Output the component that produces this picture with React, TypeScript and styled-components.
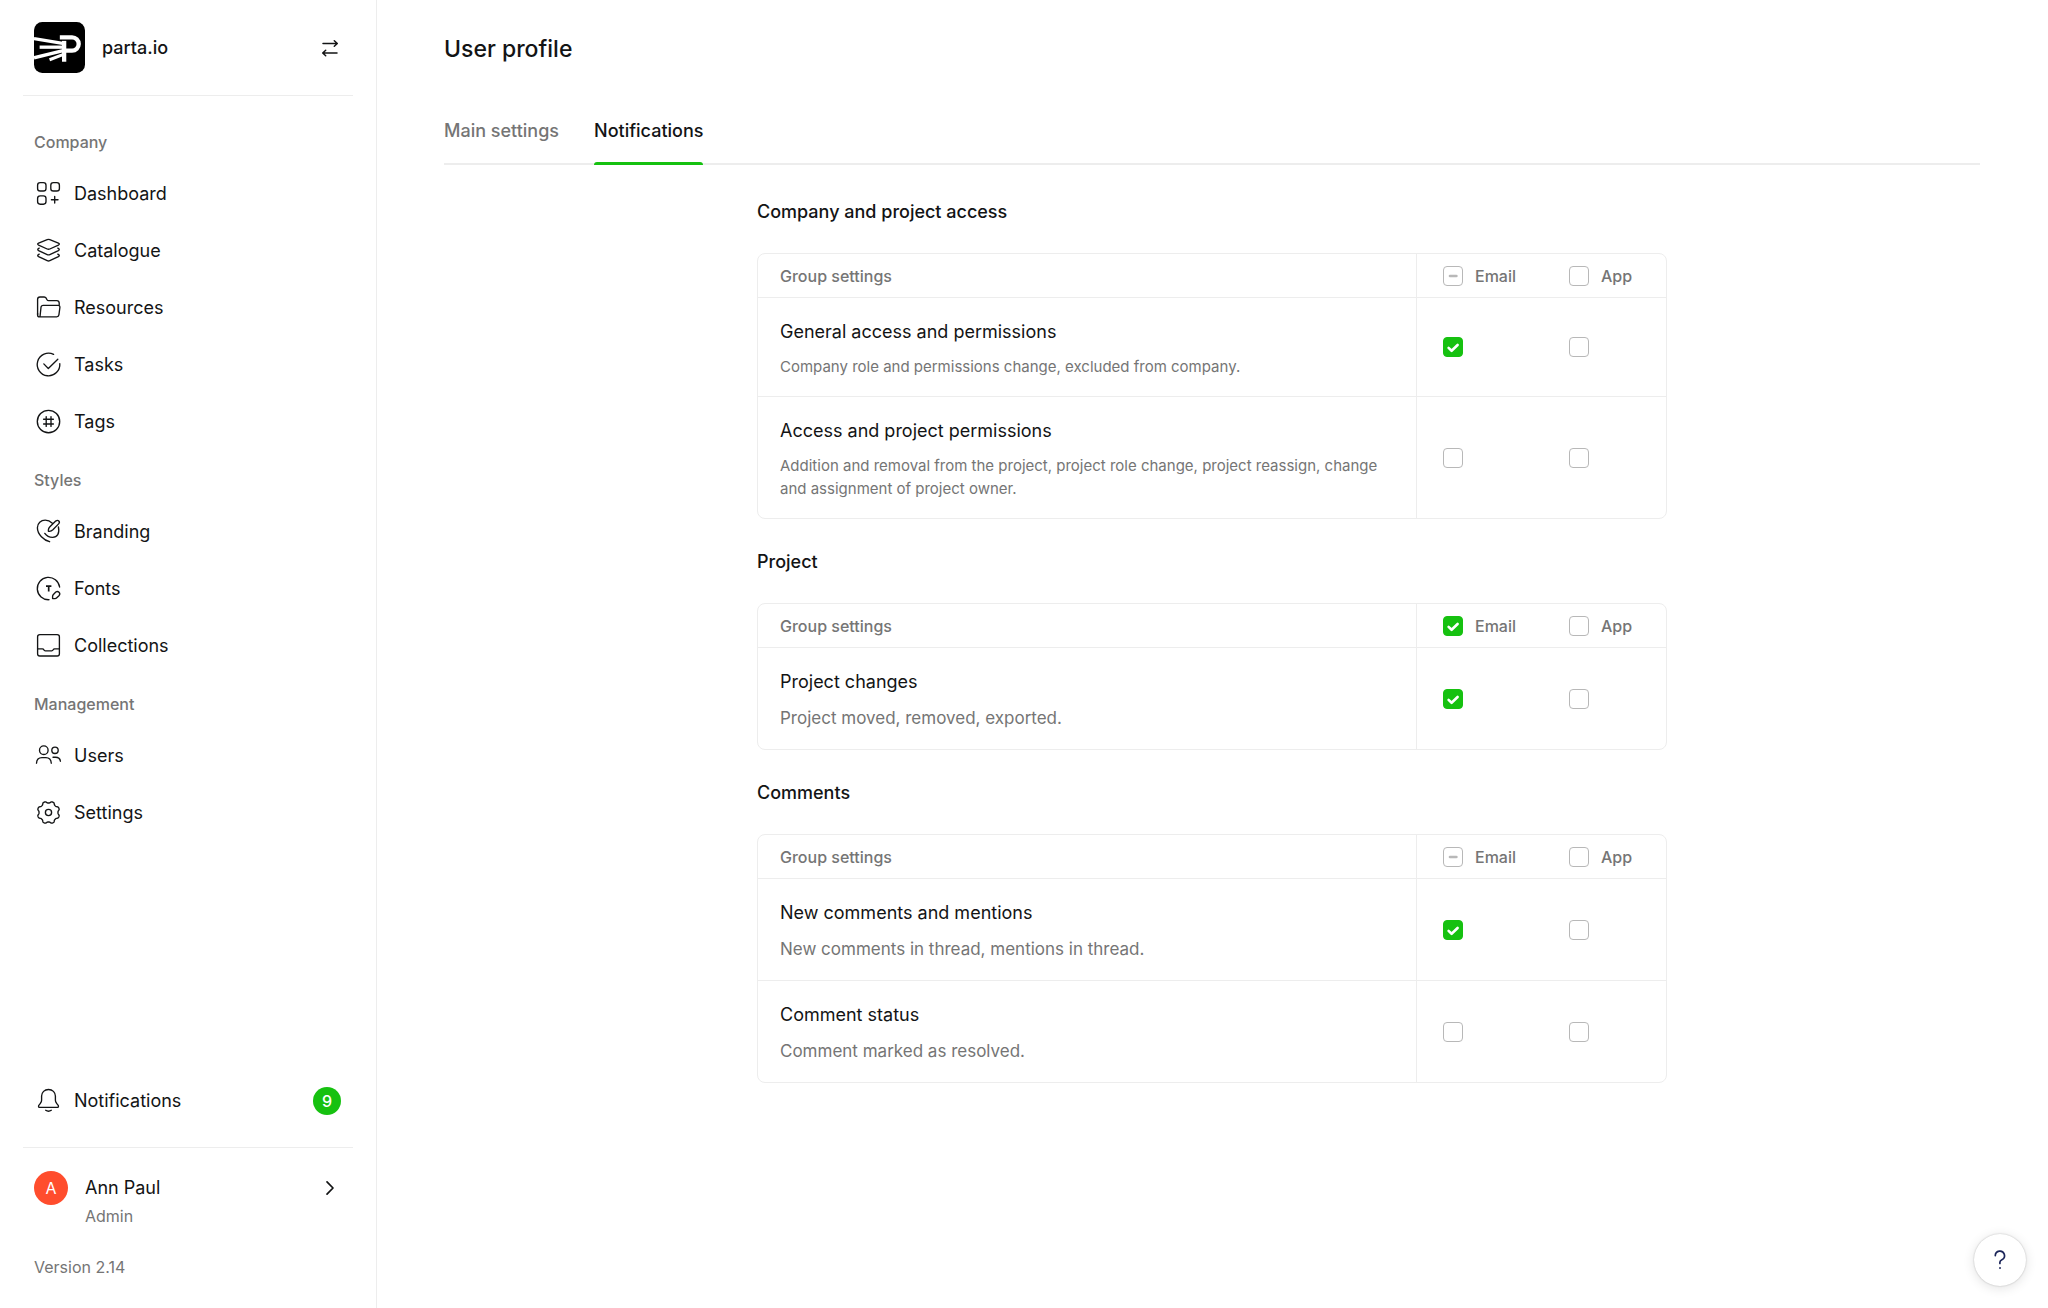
import React, { useEffect, useRef, useState } from "react";
import styled, { createGlobalStyle } from "styled-components";

const color = {
  text: "#131415",
  muted: "#757575",
  line: "#ededed",
  green: "#16c110",
  red: "#ff4d2d",
  control: "#b8b8b8",
};

const GlobalStyle = createGlobalStyle`
  *, *::before, *::after { box-sizing: border-box; }
  body {
    margin: 0;
    background: #fff;
    color: ${color.text};
    font-family: Inter, "Liberation Sans", sans-serif;
    font-size: 18px;
    line-height: 24px;
  }
  button { font: inherit; color: inherit; background: none; border: 0; padding: 0; cursor: pointer; }
  h1, h2, p { margin: 0; }
`;

const Layout = styled.div`
  display: flex;
  min-height: 100vh;
`;

const Sidebar = styled.aside`
  display: flex;
  flex-direction: column;
  flex: 0 0 377px;
  padding: 0 23px;
  border-right: 1px solid ${color.line};
`;

const Brand = styled.div`
  display: flex;
  align-items: center;
  gap: 17px;
  padding: 22px 12px 22px 11px;
  margin-bottom: 16px;
  border-bottom: 1px solid ${color.line};
`;

const BrandName = styled.span`
  flex: 1;
  font-weight: 500;
`;

const IconButton = styled.button`
  display: grid;
  place-items: center;
  width: 22px;
  height: 22px;
`;

const NavLabel = styled.h2`
  padding: 18px 11px 11px;
  font-size: 16px;
  font-weight: 500;
  color: ${color.muted};
`;

const NavItem = styled.a`
  display: flex;
  align-items: center;
  gap: 13px;
  height: 57px;
  padding: 0 12px 0 13px;
  color: inherit;
  text-decoration: none;
`;

const NavText = styled.span`
  flex: 1;
`;

const Badge = styled.span`
  display: grid;
  place-items: center;
  width: 28px;
  height: 28px;
  border-radius: 14px;
  background: ${color.green};
  color: #fff;
  font-size: 16px;
  font-weight: 500;
`;

const SidebarFooter = styled.div`
  margin-top: auto;
  padding-bottom: 29px;
`;

const Account = styled.button`
  display: grid;
  grid-template-columns: 34px 1fr 22px;
  column-gap: 17px;
  row-gap: 1px;
  align-items: center;
  justify-items: start;
  width: 100%;
  margin-top: 18px;
  padding: 23px 12px 0 11px;
  border-top: 1px solid ${color.line};
  text-align: left;
`;

const Avatar = styled.span`
  display: grid;
  place-items: center;
  width: 34px;
  height: 34px;
  border-radius: 17px;
  background: ${color.red};
  color: #fff;
  font-size: 16px;
`;

const Role = styled.span`
  grid-column: 2;
  font-size: 16px;
  line-height: 20px;
  color: ${color.muted};
`;

const Version = styled.p`
  padding: 29px 11px 0;
  font-size: 16px;
  color: ${color.muted};
`;

const Main = styled.main`
  flex: 1;
  min-width: 0;
  padding: 33px 68px 60px 67px;
`;

const Title = styled.h1`
  font-size: 23px;
  font-weight: 500;
  line-height: 32px;
`;

const Tabs = styled.div`
  display: flex;
  gap: 35px;
  margin-top: 54px;
  box-shadow: inset 0 -2px ${color.line};
`;

const Tab = styled.button<{ $active?: boolean }>`
  display: flex;
  flex-direction: column;
  gap: 19px;
  font-weight: 500;
  color: ${(p) => (p.$active ? color.text : color.muted)};

  &::after {
    content: "";
    align-self: stretch;
    height: 3px;
    border-radius: 3px 3px 0 0;
    background: ${(p) => (p.$active ? color.green : "transparent")};
  }
`;

const Panel = styled.div`
  display: grid;
  gap: 31px;
  max-width: 910px;
  margin: 0 auto;
  padding-top: 35px;
`;

const SectionTitle = styled.h2`
  margin-bottom: 29px;
  font-size: 18px;
  font-weight: 500;
`;

const Table = styled.table`
  width: 100%;
  table-layout: fixed;
  border: 1px solid ${color.line};
  border-radius: 8px;
  border-collapse: separate;
  border-spacing: 0;
  text-align: left;

  tbody th, tbody td { border-top: 1px solid ${color.line}; }
`;

const HeadCell = styled.th`
  height: 43px;
  padding: 0 22px;
  border-right: 1px solid ${color.line};
  font-size: 16px;
  font-weight: 500;
  color: ${color.muted};
`;

const HeadCheck = styled.th<{ $width: number }>`
  width: ${(p) => p.$width}px;
  padding: 0 0 0 26px;
`;

const CheckLabel = styled.label`
  display: flex;
  align-items: center;
  gap: 12px;
  font-size: 16px;
  font-weight: 500;
  color: ${color.muted};
`;

const RowCell = styled.th`
  padding: 22px 12px 18px 22px;
  border-right: 1px solid ${color.line};
  font-weight: 400;
`;

const RowText = styled.p<{ $large?: boolean }>`
  margin-top: 11px;
  font-size: ${(p) => (p.$large ? 17 : 15)}px;
  line-height: ${(p) => (p.$large ? 26 : 23)}px;
  color: ${color.muted};
`;

const CheckCell = styled.td`
  padding: 0 0 0 26px;
`;

const CheckWrap = styled.span`
  display: grid;
  width: 20px;
  height: 20px;

  & > * { grid-area: 1 / 1; }
  svg { pointer-events: none; }
`;

const CheckInput = styled.input`
  appearance: none;
  width: 20px;
  height: 20px;
  margin: 0;
  border: 1px solid ${color.control};
  border-radius: 4px;
  background: #fff;
  cursor: pointer;

  &:checked { border-color: ${color.green}; background: ${color.green}; }
`;

const HelpButton = styled.button`
  position: fixed;
  right: 22px;
  bottom: 22px;
  display: grid;
  place-items: center;
  width: 52px;
  height: 52px;
  border-radius: 26px;
  background: #fff;
  box-shadow: 0 0 2px rgba(0, 0, 0, 0.25), 0 2px 12px rgba(0, 0, 0, 0.12);
`;

const LineSvg = styled.svg`
  flex: none;
  fill: none;
  stroke: currentColor;
  stroke-width: 1.35;
  stroke-linecap: round;
  stroke-linejoin: round;
`;

function gearPath() {
  const points: string[] = [];
  for (let i = 0; i < 160; i++) {
    const a = (i / 160) * Math.PI * 2;
    const wave = Math.cos(8 * (a - Math.PI / 8));
    const r = 10.35 + 0.95 * Math.tanh(wave * 1.6);
    points.push(`${(12.5 + r * Math.cos(a)).toFixed(2)} ${(12.5 + r * Math.sin(a)).toFixed(2)}`);
  }
  return `M${points.join("L")}Z`;
}

const icons: Record<string, React.ReactNode> = {
  dashboard: (
    <>
      <rect x="1.6" y="1.6" width="8.4" height="8.4" rx="2.6" />
      <rect x="14.8" y="1.6" width="8.6" height="8.4" rx="2.6" />
      <rect x="1.6" y="14.8" width="8.4" height="8.4" rx="2.6" />
      <path d="M18.7 15.4v6.6M15.4 18.7H22" />
    </>
  ),
  catalogue: (
    <>
      <path d="M11.2 1.6q1.3-.5 2.6 0l8.6 3.5q1.9 1 0 2L13.8 11q-1.3.6-2.6 0L2.6 7.1q-1.9-1 0-2z" />
      <path d="M3.2 10.1q-2.6 1.4-.6 2.6l8.6 3.9q1.3.6 2.6 0l8.6-3.9q2-1.2-.6-2.6" />
      <path d="M3.2 16.1q-2.6 1.4-.6 2.6l8.6 4q1.3.6 2.6 0l8.6-4q2-1.2-.6-2.6" />
    </>
  ),
  resources: (
    <>
      <path d="M1.6 19.5V4.3Q1.6 2 3.9 2h4.3q1.3 0 2 1.2l.8 1.5q.5.9 1.6.9h8.2q2.3 0 2.4 2.3v2.2" />
      <path d="M1.6 18.5v1.4q0 1.9 1.9 1.9h17.2q1.9 0 2.2-1.9l1-7.4q.2-2.2-1.9-2.2H7.2q-2 0-2.2 2l-1 9.4" />
    </>
  ),
  tasks: (
    <>
      <path d="M17.6 2.4A11.3 11.3 0 1 0 23.8 11.6" />
      <path d="M7.8 11.9l4.5 4.6 9.5-9.2" />
    </>
  ),
  tags: (
    <>
      <circle cx="12.5" cy="12.5" r="11.2" />
      <path d="M10.2 7.6v9.8M15 7.6v9.8M7.6 10.2h9.8M7.6 15h9.8" />
    </>
  ),
  branding: (
    <>
      <path d="M13.6 22.7C8 21.4 1.4 15.5 1.4 8.8C1.4 4 5 1.2 9.2 1.2c2.6 0 5.2 1.2 7.2 3" />
      <path d="M8.8 14.4c1.6 2.3 4.8 3.9 7.8 3.9c4.6 0 7.3-3.6 5.8-10.4" />
      <path d="M12.3 11.4q.1-2.1 1.6-3.6l5.8-5.7q1.8-1.4 3.1-.2t-.2 3l-5.7 5.8q-1.5 1.4-3.6 1.7q-1.2.1-1-1z" />
    </>
  ),
  fonts: (
    <>
      <path d="M13 23.7A11.2 11.2 0 1 1 23.6 11" />
      <path d="M10 10.2h5.4M12.7 10.2v5.2" strokeWidth="1.7" strokeLinecap="butt" />
      <path d="M16.6 22.4v-2.2q0-1 .8-1.8l2.4-2.4q1.7-1.2 3.2.2t.2 3.2l-2.4 2.4q-.8.8-1.8.8h-2.2z" />
    </>
  ),
  collections: (
    <>
      <rect x="1.6" y="1.6" width="21.8" height="21.4" rx="2.2" />
      <path d="M1.6 15.8h4.8q1 0 1.4 1t1.5 1h6.4q1 0 1.5-1t1.4-1h4.8" />
    </>
  ),
  users: (
    <>
      <circle cx="7.8" cy="7.2" r="4.3" />
      <circle cx="19" cy="7.3" r="3.2" />
      <path d="M.5 20.2q.3-5.6 5.4-5.6h4q5 0 5.4 5.6M17 14.2h2.4q4.6 0 5 4" />
    </>
  ),
  settings: (
    <>
      <path d={gearPath()} />
      <circle cx="12.5" cy="12.5" r="3.1" />
    </>
  ),
  bell: (
    <>
      <path d="M12.5 1.5c-4 0-6.9 2.8-6.9 6.6v4.2q0 1.6-1.2 3l-1.6 2q-.9 2.1 1.2 2.1h17q2.1 0 1.2-2.1l-1.6-2q-1.2-1.4-1.2-3V8.1c0-3.8-2.9-6.6-6.9-6.6z" />
      <path d="M9.7 22.3q2.8 1.9 5.6 0" />
    </>
  ),
};

function Icon({ name }: { name: string }) {
  return (
    <LineSvg width="25" height="25" viewBox="0 0 25 25" overflow="visible" aria-hidden="true">
      {icons[name]}
    </LineSvg>
  );
}

function Logo() {
  return (
    <svg width="51" height="51" viewBox="0 0 154 154" role="img" aria-label="Parta logo">
      <rect width="154" height="154" rx="25" fill="#000" />
      <g fill="none" stroke="#fff">
        <path d="M78 46.5H115a20 20 0 0 1 0 40H91" strokeWidth="13" />
        <path d="M91 57V120" strokeWidth="13" />
        <path d="M0 50L91 65" strokeWidth="10" />
        <path d="M17 76H91" strokeWidth="10" />
        <path d="M0 108L91 86" strokeWidth="10" />
        <path d="M47 114L91 97" strokeWidth="9" />
      </g>
    </svg>
  );
}

const nav = [
  {
    label: "Company",
    items: [
      ["dashboard", "Dashboard"],
      ["catalogue", "Catalogue"],
      ["resources", "Resources"],
      ["tasks", "Tasks"],
      ["tags", "Tags"],
    ],
  },
  {
    label: "Styles",
    items: [
      ["branding", "Branding"],
      ["fonts", "Fonts"],
      ["collections", "Collections"],
    ],
  },
  {
    label: "Management",
    items: [
      ["users", "Users"],
      ["settings", "Settings"],
    ],
  },
];

type Channel = "email" | "app";
type Row = { title: string; text: string; email: boolean; app: boolean };
type Group = { title: string; large?: boolean; rows: Row[] };

const initialGroups: Group[] = [
  {
    title: "Company and project access",
    rows: [
      {
        title: "General access and permissions",
        text: "Company role and permissions change, excluded from company.",
        email: true,
        app: false,
      },
      {
        title: "Access and project permissions",
        text: "Addition and removal from the project, project role change, project reassign, change and assignment of project owner.",
        email: false,
        app: false,
      },
    ],
  },
  {
    title: "Project",
    large: true,
    rows: [{ title: "Project changes", text: "Project moved, removed, exported.", email: true, app: false }],
  },
  {
    title: "Comments",
    large: true,
    rows: [
      {
        title: "New comments and mentions",
        text: "New comments in thread, mentions in thread.",
        email: true,
        app: false,
      },
      { title: "Comment status", text: "Comment marked as resolved.", email: false, app: false },
    ],
  },
];

type CheckboxProps = {
  checked: boolean;
  mixed?: boolean;
  label?: string;
  onChange: (value: boolean) => void;
};

function Checkbox({ checked, mixed = false, label, onChange }: CheckboxProps) {
  const ref = useRef<HTMLInputElement>(null);
  useEffect(() => {
    if (ref.current) ref.current.indeterminate = mixed;
  }, [mixed]);
  return (
    <CheckWrap>
      <CheckInput
        ref={ref}
        type="checkbox"
        aria-label={label}
        checked={checked}
        onChange={(e) => onChange(e.target.checked)}
      />
      {checked && (
        <svg width="20" height="20" viewBox="0 0 20 20" fill="none" aria-hidden="true">
          <path d="M5.6 10.9l3 2.9 6-5.8" stroke="#fff" strokeWidth="2.6" strokeLinecap="round" strokeLinejoin="round" />
        </svg>
      )}
      {mixed && (
        <svg width="20" height="20" viewBox="0 0 20 20" fill="none" aria-hidden="true">
          <path d="M7 10h6.4" stroke={color.control} strokeWidth="2.6" strokeLinecap="round" />
        </svg>
      )}
    </CheckWrap>
  );
}

const channels: { key: Channel; label: string; width: number }[] = [
  { key: "email", label: "Email", width: 126 },
  { key: "app", label: "App", width: 123 },
];

function GroupTable({ group, onSet }: { group: Group; onSet: (c: Channel, v: boolean, row?: number) => void }) {
  return (
    <section>
      <SectionTitle>{group.title}</SectionTitle>
      <Table>
        <thead>
          <tr>
            <HeadCell scope="col">Group settings</HeadCell>
            {channels.map(({ key, label, width }) => {
              const all = group.rows.every((r) => r[key]);
              const some = group.rows.some((r) => r[key]);
              return (
                <HeadCheck key={key} scope="col" $width={width}>
                  <CheckLabel>
                    <Checkbox checked={all} mixed={some && !all} onChange={(v) => onSet(key, v)} />
                    {label}
                  </CheckLabel>
                </HeadCheck>
              );
            })}
          </tr>
        </thead>
        <tbody>
          {group.rows.map((row, i) => (
            <tr key={row.title}>
              <RowCell scope="row">
                {row.title}
                <RowText $large={group.large}>{row.text}</RowText>
              </RowCell>
              {channels.map(({ key, label }) => (
                <CheckCell key={key}>
                  <Checkbox checked={row[key]} label={`${row.title}: ${label}`} onChange={(v) => onSet(key, v, i)} />
                </CheckCell>
              ))}
            </tr>
          ))}
        </tbody>
      </Table>
    </section>
  );
}

export default function App() {
  const [groups, setGroups] = useState(initialGroups);

  const setValue = (g: number) => (channel: Channel, value: boolean, row?: number) =>
    setGroups((current) =>
      current.map((group, gi) =>
        gi !== g
          ? group
          : {
              ...group,
              rows: group.rows.map((r, ri) => (row === undefined || row === ri ? { ...r, [channel]: value } : r)),
            }
      )
    );

  return (
    <>
      <GlobalStyle />
      <Layout>
        <Sidebar>
          <Brand>
            <Logo />
            <BrandName>parta.io</BrandName>
            <IconButton aria-label="Switch company">
              <LineSvg width="22" height="22" viewBox="0 0 22 22">
                <path d="M4 6.5h14M15.3 3.7l3 2.8-3 2.8M18 16H4M6.7 13.2l-3 2.8 3 2.8" strokeWidth="1.5" />
              </LineSvg>
            </IconButton>
          </Brand>
          <nav>
            {nav.map((section) => (
              <React.Fragment key={section.label}>
                <NavLabel>{section.label}</NavLabel>
                {section.items.map(([icon, text]) => (
                  <NavItem key={text} href="#">
                    <Icon name={icon} />
                    <NavText>{text}</NavText>
                  </NavItem>
                ))}
              </React.Fragment>
            ))}
          </nav>
          <SidebarFooter>
            <NavItem href="#">
              <Icon name="bell" />
              <NavText>Notifications</NavText>
              <Badge>9</Badge>
            </NavItem>
            <Account>
              <Avatar>A</Avatar>
              <span>Ann Paul</span>
              <LineSvg width="22" height="22" viewBox="0 0 22 22" aria-hidden="true">
                <path d="M8 4.8l6 6.2-6 6.2" strokeWidth="1.7" />
              </LineSvg>
              <Role>Admin</Role>
            </Account>
            <Version>Version 2.14</Version>
          </SidebarFooter>
        </Sidebar>
        <Main>
          <Title>User profile</Title>
          <Tabs role="tablist">
            <Tab role="tab" aria-selected={false}>
              Main settings
            </Tab>
            <Tab role="tab" aria-selected $active>
              Notifications
            </Tab>
          </Tabs>
          <Panel>
            {groups.map((group, i) => (
              <GroupTable key={group.title} group={group} onSet={setValue(i)} />
            ))}
          </Panel>
        </Main>
      </Layout>
      <HelpButton aria-label="Help">
        <LineSvg width="22" height="22" viewBox="0 0 22 22">
          <path d="M6.3 6.6a4.6 4.6 0 1 1 6.6 4.2q-2 1-2 2.4v1.2" stroke="#1b2559" strokeWidth="1.7" />
          <circle cx="10.9" cy="19" r="0.5" fill="#1b2559" stroke="#1b2559" strokeWidth="0.8" />
        </LineSvg>
      </HelpButton>
    </>
  );
}
